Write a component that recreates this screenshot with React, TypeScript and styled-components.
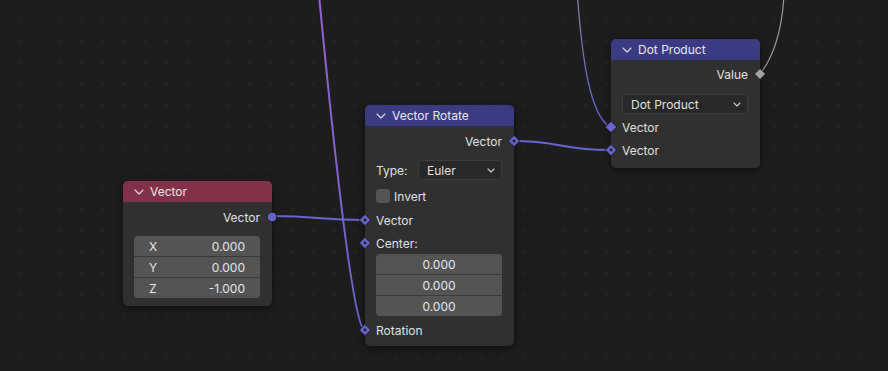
import React from "react";
import styled, { createGlobalStyle } from "styled-components";

const Global = createGlobalStyle`
  html, body { margin: 0; padding: 0; background: #1d1d1d; }
  body { font-family: Inter, "Noto Sans", "DejaVu Sans", sans-serif; -webkit-font-smoothing: antialiased; }
`;

const Canvas = styled.div`
  position: relative;
  width: 888px;
  height: 371px;
  overflow: hidden;
  background-color: #1d1d1d;
  background-image: radial-gradient(circle, #292929 0.9px, transparent 1.4px);
  background-size: 21px 21px;
  background-position: 8.5px 10.5px;
`;

const Wires = styled.svg`
  position: absolute;
  inset: 0;
  width: 888px;
  height: 371px;
  pointer-events: none;
`;

const Node = styled.div<{ $x: number; $y: number }>`
  position: absolute;
  left: ${(p) => p.$x}px;
  top: ${(p) => p.$y}px;
  width: 149px;
  background: #303030;
  border-radius: 5px;
  box-shadow: 0 2px 7px rgba(0, 0, 0, 0.55);
  color: #e0e0e0;
  font-size: 12px;
`;

const Header = styled.div<{ $color: string }>`
  height: 21px;
  background: ${(p) => p.$color};
  border-radius: 5px 5px 0 0;
  display: flex;
  align-items: center;
  gap: 6px;
  padding-left: 11px;
  color: #e8e8e8;
  font-size: 12px;
`;

const Body = styled.div<{ $pt?: number; $pb: number }>`
  display: flex;
  flex-direction: column;
  padding: ${(p) => p.$pt ?? 4}px 12px ${(p) => p.$pb}px 11px;
`;

const Row = styled.div<{ $mt?: number; $out?: boolean }>`
  position: relative;
  height: 22px;
  margin-top: ${(p) => p.$mt ?? 0}px;
  display: flex;
  align-items: center;
  justify-content: ${(p) => (p.$out ? "flex-end" : "flex-start")};
`;

const SocketWrap = styled.span<{ $out?: boolean }>`
  position: absolute;
  top: 50%;
  ${(p) => (p.$out ? "right: -12px;" : "left: -11px;")}
  width: 14px;
  height: 14px;
  transform: translate(${(p) => (p.$out ? "50%" : "-50%")}, -50%);
  display: block;
`;

type SockKind = "circle" | "dotDiamond" | "diamond" | "grey";

const Socket = ({ kind, out }: { kind: SockKind; out?: boolean }) => (
  <SocketWrap $out={out}>
    <svg width="14" height="14" viewBox="0 0 14 14">
      {kind === "circle" && (
        <circle cx="7" cy="7" r="4.8" fill="#6363c7" stroke="#161616" strokeWidth="0.9" />
      )}
      {kind === "dotDiamond" && (
        <>
          <polygon points="7,1.3 12.7,7 7,12.7 1.3,7" fill="#6565cf" stroke="#161616" strokeWidth="0.9" />
          <circle cx="7" cy="7" r="1.4" fill="#1c1c1c" />
        </>
      )}
      {kind === "diamond" && (
        <polygon points="7,1.2 12.8,7 7,12.8 1.2,7" fill="#6565cf" stroke="#161616" strokeWidth="0.9" />
      )}
      {kind === "grey" && (
        <polygon points="7,1.4 12.6,7 7,12.6 1.4,7" fill="#a3a3a3" stroke="#161616" strokeWidth="0.9" />
      )}
    </svg>
  </SocketWrap>
);

const Chevron = () => (
  <svg width="10" height="6" viewBox="0 0 10 6">
    <polyline points="1,1 5,5 9,1" fill="none" stroke="#dcdcdc" strokeWidth="1.1" strokeLinecap="round" strokeLinejoin="round" />
  </svg>
);

const SmallChevron = () => (
  <svg width="8" height="5" viewBox="0 0 8 5">
    <polyline points="1,1 4,4 7,1" fill="none" stroke="#d0d0d0" strokeWidth="1.1" strokeLinecap="round" strokeLinejoin="round" />
  </svg>
);

const Label = styled.span`
  color: #e0e0e0;
  white-space: nowrap;
`;

const FieldLabel = styled.span`
  width: 42px;
  flex: none;
  color: #e0e0e0;
`;

const Dropdown = styled.div`
  flex: 1;
  height: 20px;
  box-sizing: border-box;
  background: #282828;
  border: 1px solid #3c3c3c;
  border-radius: 4px;
  display: flex;
  align-items: center;
  justify-content: space-between;
  padding: 0 6px 0 8px;
  color: #e0e0e0;
`;

const Checkbox = styled.span`
  width: 14px;
  height: 14px;
  border-radius: 3px;
  background: #545454;
  margin-right: 4px;
  flex: none;
`;

const Fields = styled.div<{ $mt?: number }>`
  margin-top: ${(p) => p.$mt ?? 0}px;
  display: flex;
  flex-direction: column;
  gap: 1px;
  background: #3a3a3a;
  border-radius: 4px;
  overflow: hidden;
`;

const Field = styled.div<{ $center?: boolean }>`
  height: 20px;
  background: #545454;
  display: flex;
  align-items: center;
  justify-content: ${(p) => (p.$center ? "center" : "space-between")};
  padding: 0 15px;
  color: #e6e6e6;
`;

export default function App() {
  return (
    <>
      <Global />
      <Canvas>
        <Wires viewBox="0 0 888 371">
          <defs>
            <linearGradient id="purple" gradientUnits="userSpaceOnUse" x1="0" y1="0" x2="0" y2="330">
              <stop offset="0" stopColor="#9a60d8" />
              <stop offset="1" stopColor="#6865d4" />
            </linearGradient>
            <linearGradient id="thin" gradientUnits="userSpaceOnUse" x1="0" y1="0" x2="0" y2="127">
              <stop offset="0" stopColor="#7f7aa8" />
              <stop offset="1" stopColor="#5e5ed0" />
            </linearGradient>
          </defs>
          <path d="M319 -5 C332 130, 352 320, 364 330" fill="none" stroke="url(#purple)" strokeWidth="2" />
          <path d="M577 -10 C582 60, 590 115, 610 127" fill="none" stroke="url(#thin)" strokeWidth="1.3" />
          <path d="M784 -5 C782 30, 775 55, 760 74" fill="none" stroke="#9a9a9a" strokeWidth="1.2" />
          <path d="M272 216 C318 216, 318 220, 364 220" fill="none" stroke="#6565d5" strokeWidth="2" />
          <path d="M513 141 C561 141, 561 150, 610 150" fill="none" stroke="#6565d5" strokeWidth="2" />
        </Wires>

        <Node $x={123} $y={181}>
          <Header $color="#83314a">
            <Chevron />
            <span>Vector</span>
          </Header>
          <Body $pb={8}>
            <Row $out>
              <Label>Vector</Label>
              <Socket kind="circle" out />
            </Row>
            <Fields $mt={8}>
              <Field><span>X</span><span>0.000</span></Field>
              <Field><span>Y</span><span>0.000</span></Field>
              <Field><span>Z</span><span>-1.000</span></Field>
            </Fields>
          </Body>
        </Node>

        <Node $x={365} $y={105}>
          <Header $color="#3b3b83">
            <Chevron />
            <span>Vector Rotate</span>
          </Header>
          <Body $pb={5}>
            <Row $out>
              <Label>Vector</Label>
              <Socket kind="dotDiamond" out />
            </Row>
            <Row $mt={7}>
              <FieldLabel>Type:</FieldLabel>
              <Dropdown>
                <span>Euler</span>
                <SmallChevron />
              </Dropdown>
            </Row>
            <Row $mt={4}>
              <Checkbox />
              <Label>Invert</Label>
            </Row>
            <Row $mt={2}>
              <Socket kind="dotDiamond" />
              <Label>Vector</Label>
            </Row>
            <Row $mt={1}>
              <Socket kind="dotDiamond" />
              <Label>Center:</Label>
            </Row>
            <Fields>
              <Field $center>0.000</Field>
              <Field $center>0.000</Field>
              <Field $center>0.000</Field>
            </Fields>
            <Row $mt={3}>
              <Socket kind="dotDiamond" />
              <Label>Rotation</Label>
            </Row>
          </Body>
        </Node>

        <Node $x={611} $y={39}>
          <Header $color="#3b3b83">
            <Chevron />
            <span>Dot Product</span>
          </Header>
          <Body $pt={3} $pb={7}>
            <Row $out>
              <Label>Value</Label>
              <Socket kind="grey" out />
            </Row>
            <Row $mt={8}>
              <Dropdown>
                <span>Dot Product</span>
                <SmallChevron />
              </Dropdown>
            </Row>
            <Row $mt={1}>
              <Socket kind="diamond" />
              <Label>Vector</Label>
            </Row>
            <Row $mt={1}>
              <Socket kind="dotDiamond" />
              <Label>Vector</Label>
            </Row>
          </Body>
        </Node>
      </Canvas>
    </>
  );
}
